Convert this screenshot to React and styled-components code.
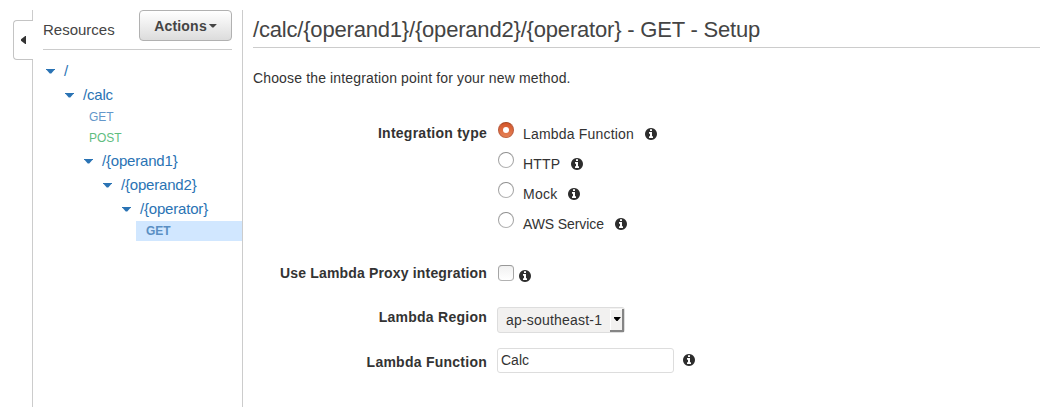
import React from "react";
import styled, { createGlobalStyle, css } from "styled-components";

const GlobalStyle = createGlobalStyle`
  *, *::before, *::after { box-sizing: border-box; }
  body {
    margin: 0;
    background: #fff;
    color: #333;
    font-family: "Liberation Sans", Arial, sans-serif;
    font-size: 14px;
    line-height: 20px;
    overflow: hidden;
  }
`;

const Page = styled.div`
  display: flex;
  width: 1040px;
  height: 407px;
  padding-top: 10px;
`;

const Gutter = styled.div`
  width: 33px;
  padding: 10px 0 0 13px;
  border-right: 1px solid #ccc;
`;

const CollapseTab = styled.div`
  display: flex;
  align-items: center;
  width: 20px;
  height: 40px;
  padding-left: 7px;
  background: #fff;
  border: 1px solid #c4c4c4;
  border-right: 0;
  border-radius: 4px 0 0 4px;
`;

const LeftArrow = styled.span`
  width: 5px;
  height: 8px;
  background: #333;
  clip-path: polygon(100% 0, 100% 100%, 85% 100%, 0 58%, 0 42%, 85% 0);
`;

const DownArrow = styled.span`
  flex: none;
  width: ${(p) => p.$width}px;
  height: ${(p) => p.$height}px;
  background: currentColor;
  clip-path: polygon(0 0, 100% 0, 100% 15%, 58% 100%, 42% 100%, 0 15%);
`;

const Sidebar = styled.aside`
  width: 210px;
  border-right: 1px solid #ccc;
`;

const SidebarHeader = styled.header`
  display: flex;
  justify-content: space-between;
  height: 40px;
  margin: 0 10px;
  border-bottom: 1px solid #ccc;
`;

const SidebarTitle = styled.span`
  padding-top: 10px;
  font-size: 15px;
  color: #444;
`;

const ActionsButton = styled.button`
  display: flex;
  align-items: center;
  justify-content: center;
  gap: 2px;
  width: 93px;
  height: 31px;
  padding: 0;
  border: 1px solid #b1b1b1;
  border-radius: 4px;
  background: linear-gradient(#fff, #dcdcdc);
  color: #444;
  font: bold 14px "Liberation Sans", Arial, sans-serif;
  letter-spacing: 0.2px;
`;

const Tree = styled.div`
  padding-top: 9px;
`;

const ResourceRow = styled.div`
  display: flex;
  align-items: center;
  gap: 9px;
  height: 24px;
  padding-left: ${(p) => 13 + p.$level * 19}px;
  font-size: 15px;
  letter-spacing: -0.19px;
  color: #2a73b4;
`;

const MethodRow = styled.div`
  height: 20px;
  margin: 0 0 1px ${(p) => 27 + p.$level * 19}px;
  padding-left: 10px;
  font-size: 12px;
  color: ${(p) => (p.$method === "POST" ? "#5fbd80" : "#6497ca")};
  ${(p) =>
    p.$selected &&
    css`
      background: #d1e7ff;
      color: #5a8fc3;
      font-weight: bold;
    `}
`;

const Main = styled.main`
  flex: 1;
  padding-left: 10px;
`;

const Title = styled.h1`
  height: 38px;
  margin: 0;
  padding-top: 6px;
  border-bottom: 1px solid #ccc;
  color: #444;
  font-size: 22px;
  font-weight: normal;
  letter-spacing: -0.19px;
  line-height: 28px;
`;

const Intro = styled.p`
  margin: 20px 0 32px;
  letter-spacing: 0.145px;
`;

const Field = styled.div`
  display: grid;
  grid-template-columns: 234px 1fr;
  column-gap: ${(p) => p.$gap || 10}px;
  height: ${(p) => p.$height}px;
`;

const Label = styled.span`
  padding-top: ${(p) => p.$top}px;
  text-align: right;
  font-weight: bold;
  letter-spacing: ${(p) => p.$spacing || 0.25}px;
`;

const Option = styled.div`
  display: flex;
  height: 30px;
`;

const OptionText = styled.span`
  display: flex;
  align-items: center;
  height: 20px;
  margin: 4px 0 0 9px;
  letter-spacing: ${(p) => p.$spacing}px;
`;

const Radio = styled.span`
  display: flex;
  align-items: center;
  justify-content: center;
  width: 16px;
  height: 16px;
  margin-top: 2px;
  border: 1px solid;
  border-color: ${(p) => (p.$on ? "#a9451f #b9583a #c0623e" : "#8e8e8e #a2a2a2 #b2b2b2")};
  border-radius: 50%;
  background: ${(p) => (p.$on ? "linear-gradient(#d4562a, #e58155)" : "#fff")};
  &::after {
    content: "";
    width: 6px;
    height: 6px;
    border-radius: 50%;
    background: #fff;
  }
`;

const InfoSvg = styled.svg`
  flex: none;
  width: 12px;
  height: 12px;
  margin-left: ${(p) => p.$left}px;
  fill: #2d2d2d;
`;

const InfoIcon = ({ left }) => (
  <InfoSvg $left={left} viewBox="0 128 1536 1536">
    <path d="M1024 1376v-160q0-14-9-23t-23-9h-96V672q0-14-9-23t-23-9H544q-14 0-23 9t-9 23v160q0 14 9 23t23 9h96v320h-96q-14 0-23 9t-9 23v160q0 14 9 23t23 9h448q14 0 23-9t9-23zM896 480V320q0-14-9-23t-23-9H672q-14 0-23 9t-9 23v160q0 14 9 23t23 9h192q14 0 23-9t9-23zm640 416q0 209-103 385.5T1153.5 1561 768 1664t-385.5-103T103 1281.5 0 896t103-385.5T382.5 231 768 128t385.5 103T1433 510.5 1536 896z" />
  </InfoSvg>
);

const Control = styled.div`
  display: flex;
  align-items: center;
  height: 26px;
`;

const Checkbox = styled.span`
  width: 16px;
  height: 16px;
  margin-top: -1px;
  border: 1px solid;
  border-color: #989898 #a5a5a5 #b2b2b2;
  border-radius: 4px;
  background: linear-gradient(#f1f1f1, #fff);
`;

const CheckInfo = styled.span`
  display: flex;
  padding-top: 6px;
`;

const Select = styled.div`
  display: flex;
  align-items: center;
  justify-content: space-between;
  width: 128px;
  height: 26px;
  padding: 1px 0 1px 8px;
  border: 1px solid #ddd;
  border-radius: 3px;
  background: #f2f1f0;
  letter-spacing: 0.2px;
`;

const SelectButton = styled.span`
  display: flex;
  align-items: center;
  justify-content: center;
  width: 14px;
  height: 23px;
  padding-left: 2px;
  border: solid #858585;
  border-width: 0 2px 2px 0;
  background: #f2f1f0;
  box-shadow: inset 1px 1px #fff;
  color: #000;
`;

const TextInput = styled.input`
  width: 177px;
  height: 25px;
  padding: 0 3px 1px;
  border: 1px solid #ddd;
  border-radius: 3px;
  background: #fff;
  color: #333;
  font: 14px "Liberation Sans", Arial, sans-serif;
`;

const resources = [
  { name: "/" },
  { name: "/calc", methods: ["GET", "POST"] },
  { name: "/{operand1}" },
  { name: "/{operand2}" },
  { name: "/{operator}", methods: ["GET"], selected: "GET" },
];

const integrationTypes = [
  { name: "Lambda Function", spacing: 0.19, gap: 11 },
  { name: "HTTP", spacing: 0.15, gap: 11 },
  { name: "Mock", spacing: 0.3, gap: 10 },
  { name: "AWS Service", spacing: -0.1, gap: 11 },
];

export default function App() {
  return (
    <>
      <GlobalStyle />
      <Page>
        <Gutter>
          <CollapseTab>
            <LeftArrow />
          </CollapseTab>
        </Gutter>
        <Sidebar>
          <SidebarHeader>
            <SidebarTitle>Resources</SidebarTitle>
            <ActionsButton>
              Actions
              <DownArrow $width={8} $height={4} />
            </ActionsButton>
          </SidebarHeader>
          <Tree>
            {resources.map((r, level) => (
              <React.Fragment key={r.name}>
                <ResourceRow $level={level}>
                  <DownArrow $width={9} $height={5} />
                  {r.name}
                </ResourceRow>
                {(r.methods || []).map((m) => (
                  <MethodRow key={m} $level={level} $method={m} $selected={r.selected === m}>
                    {m}
                  </MethodRow>
                ))}
              </React.Fragment>
            ))}
          </Tree>
        </Sidebar>
        <Main>
          <Title>{"/calc/{operand1}/{operand2}/{operator} - GET - Setup"}</Title>
          <Intro>Choose the integration point for your new method.</Intro>
          <Field $height={140} $gap={11}>
            <Label $top={3}>Integration type</Label>
            <div>
              {integrationTypes.map((t, i) => (
                <Option key={t.name}>
                  <Radio $on={i === 0} />
                  <OptionText $spacing={t.spacing}>
                    {t.name}
                    <InfoIcon left={t.gap} />
                  </OptionText>
                </Option>
              ))}
            </div>
          </Field>
          <Field $height={47} $gap={11}>
            <Label $top={3} $spacing={0.17}>Use Lambda Proxy integration</Label>
            <Control>
              <Checkbox />
              <CheckInfo>
                <InfoIcon left={5} />
              </CheckInfo>
            </Control>
          </Field>
          <Field $height={40}>
            <Label>Lambda Region</Label>
            <Select>
              ap-southeast-1
              <SelectButton>
                <DownArrow $width={7} $height={4} />
              </SelectButton>
            </Select>
          </Field>
          <Field $height={30}>
            <Label $top={5}>Lambda Function</Label>
            <Control>
              <TextInput defaultValue="Calc" />
              <InfoIcon left={9} />
            </Control>
          </Field>
        </Main>
      </Page>
    </>
  );
}
